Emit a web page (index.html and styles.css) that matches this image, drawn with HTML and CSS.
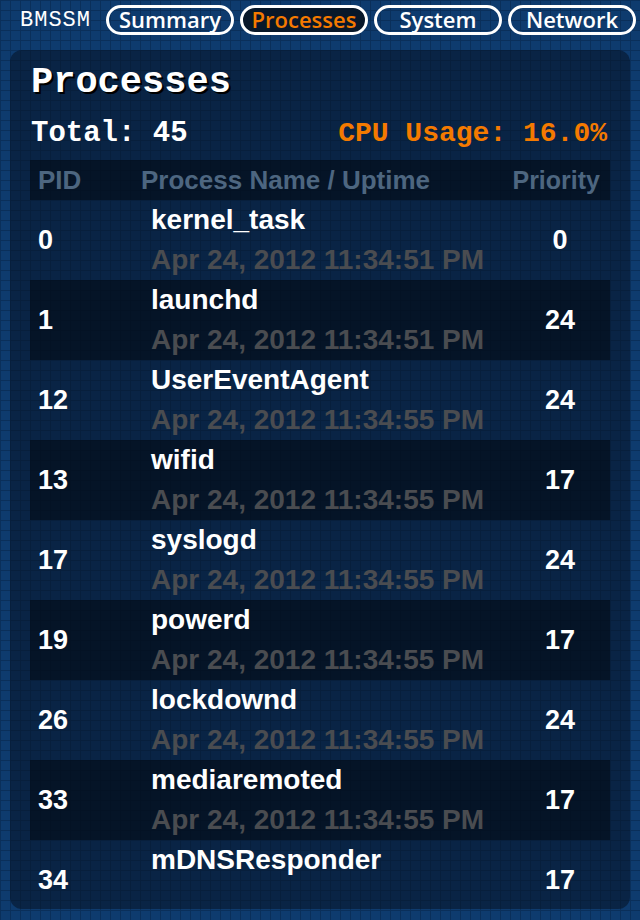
FILE: index.html
```html
<!DOCTYPE html>
<html>
<head>
<meta charset="utf-8">
<link rel="stylesheet" href="styles.css">
</head>
<body>
<header class="topbar">
  <span class="brand">BMSSM</span>
  <nav class="tabs">
    <span class="tab">Summary</span>
    <span class="tab active">Processes</span>
    <span class="tab">System</span>
    <span class="tab">Network</span>
  </nav>
</header>
<main class="panel">
  <h1 class="title">Processes</h1>
  <div class="stats">
    <span class="total">Total: 45</span>
    <span class="cpu">CPU Usage: 16.0%</span>
  </div>
  <div class="table">
    <div class="row head">
      <span class="pid">PID</span>
      <span class="name">Process Name / Uptime</span>
      <span class="prio">Priority</span>
    </div>
    <div class="body">
      <div class="row"><span class="pid">0</span><span class="name"><b>kernel_task</b><i>Apr 24, 2012 11:34:51 PM</i></span><span class="prio">0</span></div>
      <div class="row alt"><span class="pid">1</span><span class="name"><b>launchd</b><i>Apr 24, 2012 11:34:51 PM</i></span><span class="prio">24</span></div>
      <div class="row"><span class="pid">12</span><span class="name"><b>UserEventAgent</b><i>Apr 24, 2012 11:34:55 PM</i></span><span class="prio">24</span></div>
      <div class="row alt"><span class="pid">13</span><span class="name"><b>wifid</b><i>Apr 24, 2012 11:34:55 PM</i></span><span class="prio">17</span></div>
      <div class="row"><span class="pid">17</span><span class="name"><b>syslogd</b><i>Apr 24, 2012 11:34:55 PM</i></span><span class="prio">24</span></div>
      <div class="row alt"><span class="pid">19</span><span class="name"><b>powerd</b><i>Apr 24, 2012 11:34:55 PM</i></span><span class="prio">17</span></div>
      <div class="row"><span class="pid">26</span><span class="name"><b>lockdownd</b><i>Apr 24, 2012 11:34:55 PM</i></span><span class="prio">24</span></div>
      <div class="row alt"><span class="pid">33</span><span class="name"><b>mediaremoted</b><i>Apr 24, 2012 11:34:55 PM</i></span><span class="prio">17</span></div>
      <div class="row"><span class="pid">34</span><span class="name"><b>mDNSResponder</b></span><span class="prio">17</span></div>
    </div>
  </div>
</main>
</body>
</html>
```
FILE: styles.css
```css
html, body {
  margin: 0;
  padding: 0;
}
body {
  width: 640px;
  height: 920px;
  overflow: hidden;
  background-color: #0e3b6e;
  background-image:
    linear-gradient(to right, #0a2f5a 1px, transparent 1px),
    linear-gradient(to bottom, #0a2f5a 1px, transparent 1px);
  background-size: 10px 10px;
  font-family: "Liberation Sans", Arial, sans-serif;
  color: #fff;
}
.topbar {
  height: 50px;
  display: flex;
  align-items: flex-start;
  padding: 5px 0 0 20px;
  box-sizing: border-box;
}
.brand {
  font-family: "Liberation Mono", "Courier New", monospace;
  font-size: 22px;
  letter-spacing: 1px;
  line-height: 32px;
  width: 86px;
  color: #fff;
}
.tabs {
  display: flex;
  gap: 6px;
}
.tab {
  width: 128px;
  height: 30px;
  box-sizing: border-box;
  border: 3px solid #fff;
  border-radius: 15px;
  font-family: "Open Sans", sans-serif;
  font-weight: 600;
  font-size: 22px;
  line-height: 23px;
  text-align: center;
  color: #fff;
}
.tab.active {
  background: #08182a;
  color: #f47a00;
}
.panel {
  margin: 0 10px 0 10px;
  height: 859px;
  border-radius: 12px;
  overflow: hidden;
  background: rgba(6, 18, 36, 0.55);
  padding: 0 20px;
  box-sizing: border-box;
}
.title {
  margin: 0;
  padding: 12px 0 0 1px;
  height: 60px;
  box-sizing: border-box;
  font-family: "Liberation Mono", "Courier New", monospace;
  font-weight: bold;
  font-size: 37px;
  line-height: 40px;
  color: #fff;
  text-shadow: 2px 2px 0 #000;
}
.stats {
  display: flex;
  justify-content: space-between;
  height: 50px;
  padding: 2px 3px 0 1px;
  box-sizing: border-box;
  font-family: "Liberation Mono", "Courier New", monospace;
  font-weight: bold;
  font-size: 28px;
  line-height: 44px;
}
.total {
  font-size: 29px;
}
.cpu {
  color: #f47a00;
}
.table {
  width: 580px;
}
.row {
  display: grid;
  grid-template-columns: 111px 369px 100px;
  height: 80px;
  align-items: center;
  font-weight: bold;
  font-size: 27px;
}
.row.alt {
  background: rgba(3, 10, 20, 0.6);
}
.row.head {
  height: 40px;
  background: rgba(3, 10, 20, 0.6);
  color: #4d6680;
  font-size: 26px;
  line-height: 40px;
}
.pid {
  padding-left: 8px;
}
.row .name {
  display: flex;
  flex-direction: column;
  align-self: stretch;
  padding-left: 10px;
}
.row.head .name {
  padding-left: 0;
}
.name b {
  line-height: 40px;
  font-size: 28px;
  color: #fff;
}
.name i {
  font-style: normal;
  line-height: 40px;
  font-size: 28px;
  color: #4a4c50;
}
.prio {
  text-align: center;
}
.row.head .prio {
  text-align: right;
  padding-right: 10px;
  font-size: 25px;
}
```
